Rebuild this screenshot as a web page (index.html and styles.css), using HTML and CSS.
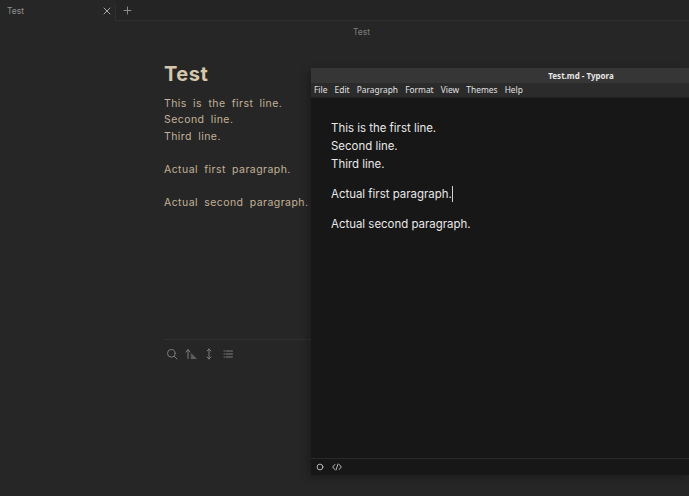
FILE: index.html
```html
<!DOCTYPE html>
<html lang="en">
<head>
<meta charset="utf-8">
<title>Test</title>
<link rel="stylesheet" href="styles.css">
</head>
<body>
<div class="obsidian">
  <div class="tabbar">
    <div class="tab">
      <span class="tab-title">Test</span>
      <svg class="tab-close" width="8" height="8" viewBox="0 0 8 8"><path d="M1 1l6 6M7 1L1 7"/></svg>
    </div>
    <svg class="tab-add" width="9" height="9" viewBox="0 0 9 9"><path d="M4.500 1v7M1 4.500h7"/></svg>
  </div>
  <div class="note-title">Test</div>
  <div class="note">
    <h1>Test</h1>
    <div class="source">
      <p>This is the first line.</p>
      <p>Second line.</p>
      <p>Third line.</p>
      <p class="blank">&nbsp;</p>
      <p>Actual first paragraph.</p>
      <p class="blank">&nbsp;</p>
      <p>Actual second paragraph.</p>
    </div>
    <div class="toolbar">
      <svg width="12" height="12" viewBox="0 0 12 12"><circle cx="5.300" cy="5.300" r="3.800"/><path d="M8.200 8.200L11 11"/></svg>
      <svg width="12" height="12" viewBox="0 0 12 12"><path d="M3 10.500V2M1 4l2-2.500L5 4"/><path class="solid" d="M6.500 10.500h4.500L6.500 6z"/></svg>
      <svg width="12" height="12" viewBox="0 0 12 12"><path d="M6 1v10M4 3l2-2 2 2M4 9l2 2 2-2"/></svg>
      <svg width="12" height="12" viewBox="0 0 12 12"><path d="M4 3h6.500M4 6h6.500M4 9h6.500M2 3h.5M2 6h.5M2 9h.5"/></svg>
    </div>
  </div>
</div>
<div class="typora">
  <div class="titlebar">Test.md - Typora</div>
  <div class="menubar">
    <span>File</span><span>Edit</span><span>Paragraph</span><span>Format</span><span>View</span><span>Themes</span><span>Help</span>
  </div>
  <div class="editor">
    <p class="para">This is the first line.<br>Second line.<br>Third line.</p>
    <p class="para">Actual first paragraph.<span class="caret"></span></p>
    <p class="para">Actual second paragraph.</p>
  </div>
  <div class="statusbar">
    <svg width="8" height="8" viewBox="0 0 8 8"><circle cx="4" cy="4" r="2.900"/></svg>
    <svg width="10" height="8" viewBox="0 0 10 8"><path d="M2.800 1.500L.7 4l2.100 2.500M7.200 1.500L9.300 4 7.200 6.500M6 1L4 7"/></svg>
  </div>
</div>
</body>
</html>
```

FILE: styles.css
```css
* { box-sizing: border-box; }
html, body { margin: 0; height: 100%; overflow: hidden; background: #262626; }
p, h1 { margin: 0; }
svg { fill: none; stroke-linecap: round; stroke-linejoin: round; flex: none; }

.obsidian { width: 689px; height: 496px; background: #262626; }

.tabbar {
  height: 21px;
  display: flex;
  align-items: flex-start;
  background: #242424;
  border-bottom: 1px solid #2f2f2f;
}
.tab {
  width: 116px;
  height: 21px;
  padding: 1px 4px 0 7px;
  display: flex;
  align-items: center;
  justify-content: space-between;
  background: #262626;
  border-right: 1px solid #2f2f2f;
  border-radius: 0 6px 0 0;
}
.tab-title { font: 8.500px "Inter", sans-serif; color: #8f8f8f; }
.tab-close { stroke: #a8a8a8; stroke-width: 1; }
.tab-add { stroke: #8a8a8a; stroke-width: 1; margin: 6px 0 0 7px; }

.note-title {
  height: 20px;
  padding: 5px 0 0 34px;
  text-align: center;
  font: 8.500px/12px "Inter", sans-serif;
  color: #7d7d7d;
}

.note { margin-left: 164px; padding-top: 20px; }
.note h1 {
  font: 700 20px/26px "Inter", sans-serif;
  letter-spacing: .5px;
  color: #d5c6ae;
}
.source {
  margin-top: 9px;
  font: 10.500px/16.450px "Inter", sans-serif;
  letter-spacing: .44px;
  word-spacing: 2.900px;
  color: #c2b197;
}
.source p { white-space: pre-wrap; }
.toolbar {
  width: 360px;
  height: 32px;
  margin-top: 128px;
  padding: 8px 0 0 2px;
  display: flex;
  gap: 6.500px;
  border-top: 1px solid #303030;
}
.toolbar svg { stroke: #7c7c7c; stroke-width: 1; }
.toolbar .solid { fill: #5f5f5f; stroke: #5f5f5f; }

.typora {
  position: absolute;
  left: 311px;
  top: 68px;
  width: 378px;
  height: 407px;
  background: #171717;
  box-shadow: -3px 3px 8px rgba(0, 0, 0, .25);
  display: flex;
  flex-direction: column;
}
.titlebar {
  height: 15px;
  padding-left: 162px;
  background: #363636;
  text-align: center;
  font: 700 8px/15px "Noto Sans", sans-serif;
  color: #e6e6e6;
}
.menubar {
  height: 15px;
  background: #2b2b2b;
  display: flex;
  gap: 7.200px;
  padding-left: 3px;
  font: 8.400px/14px "Noto Sans", sans-serif;
  color: #e0e0e0;
  border-bottom: 1px solid #222;
}
.editor {
  flex: 1;
  padding: 21px 0 0 20px;
  font: 11.450px/18.200px "Inter", sans-serif;
  color: #e8e8e8;
}
.para { margin-bottom: 11.800px; }
.caret {
  display: inline-block;
  width: 1px;
  height: 16px;
  margin-bottom: -4px;
  background: #cfcfcf;
}
.statusbar {
  height: 17px;
  display: flex;
  align-items: center;
  gap: 8px;
  padding: 0 0 1px 5px;
  background: #171717;
  border-top: 1px solid #2a2a2a;
}
.statusbar svg { stroke: #b5b5b5; stroke-width: 1; }
```
